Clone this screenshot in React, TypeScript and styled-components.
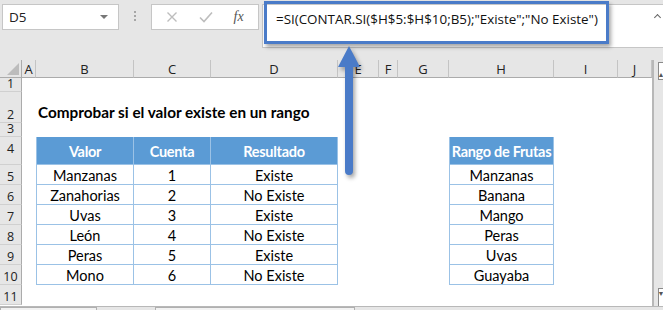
import React from "react";
import styled, { createGlobalStyle } from "styled-components";

const GlobalStyle = createGlobalStyle`
  html, body {
    margin: 0;
    padding: 0;
    background: #e6e6e6;
  }
  * {
    box-sizing: border-box;
  }
`

const COLS = [22, 14, 98, 77, 127, 41, 19, 51, 105, 64, 34]
const LETTERS = ["", "A", "B", "C", "D", "E", "F", "G", "H", "I", "J"]
const ROWS = [14, 31, 14, 28, 20, 20, 20, 20, 20, 20, 20]

const BLUE = "#4a7bc8"
const HEAD_BG = "#5b9bd5"
const LINE = "#9bc2e6"

const Page = styled.div`
  position: relative;
  width: 663px;
  height: 310px;
  overflow: hidden;
  background: #e6e6e6;
  font-family: "Open Sans", "Liberation Sans", sans-serif;
`

// FORMULA BAR

const FormulaBar = styled.div`
  display: flex;
  align-items: flex-start;
  height: 60px;
  padding: 4px 0 0 2px;
`

const NameBox = styled.div`
  display: flex;
  align-items: center;
  justify-content: space-between;
  width: 117px;
  height: 26px;
  padding: 0 6px 0 6px;
  background: #fff;
  border: 1px solid #c6c6c6;
  font-size: 13.5px;
  color: #222;
`

const Caret = styled.span`
  width: 0;
  height: 0;
  border-left: 4px solid transparent;
  border-right: 4px solid transparent;
  border-top: 4px solid #777;
  margin-right: 4px;
`

const Dots = styled.div`
  display: flex;
  flex-direction: column;
  gap: 2px;
  width: 32px;
  padding-top: 7px;
  align-items: center;

  & > span {
    width: 2px;
    height: 2px;
    background: #a6a6a6;
  }
`

const FxBox = styled.div`
  display: flex;
  align-items: center;
  justify-content: space-around;
  width: 108px;
  height: 26px;
  padding: 0 4px;
  background: #fff;
  border: 1px solid #c6c6c6;
`

const FxLabel = styled.span`
  font-family: "Liberation Serif", serif;
  font-style: italic;
  font-size: 14px;
  color: #555;
`

const FormulaInput = styled.div`
  position: relative;
  flex: 1;
  height: 44px;
  margin-left: 3px;
  padding: 5px 0 0 13px;
  background: #fff;
  border: 1px solid #c6c6c6;
  border-right: none;
  font-size: 13.4px;
  color: #111;
  white-space: nowrap;
`

const Collapse = styled.span`
  position: absolute;
  right: 3px;
  top: 10px;
  width: 5px;
  height: 5px;
  border-left: 1.5px solid #666;
  border-top: 1.5px solid #666;
  transform: rotate(45deg);
`

const Highlight = styled.div`
  position: absolute;
  left: 264px;
  top: 1px;
  width: 345px;
  height: 43px;
  border: 3px solid ${BLUE};
  box-shadow: 2px 3px 4px rgba(0, 0, 0, 0.35);
  pointer-events: none;
`

const Arrow = styled.svg`
  position: absolute;
  left: 336px;
  top: 45px;
  filter: drop-shadow(2px 3px 2px rgba(0, 0, 0, 0.35));
`

// SHEET

const Sheet = styled.div`
  display: flex;
`

const Grid = styled.div`
  display: grid;
  grid-template-columns: ${COLS.map(c => c + "px").join(" ")};
  grid-template-rows: 18px ${ROWS.map(r => r + "px").join(" ")};
  background: #fff;
  font-family: Lato, "Open Sans", sans-serif;
  font-size: 14.5px;
  color: #000;
`

const Corner = styled.div`
  position: relative;
  background: #e6e6e6;
  border-right: 1px solid #ababab;
  border-bottom: 1px solid #ababab;

  & > svg {
    position: absolute;
    right: 2px;
    bottom: 2px;
  }
`

const ColHead = styled.div`
  display: flex;
  align-items: center;
  justify-content: center;
  background: #e6e6e6;
  border-right: 1px solid #c4c4c4;
  border-bottom: 1px solid #ababab;
  font-family: "Open Sans", sans-serif;
  font-size: 13px;
  color: #222;
  overflow: hidden;
`

const RowHead = styled.div<{ $center?: boolean }>`
  display: flex;
  align-items: ${p => p.$center ? "center" : "flex-end"};
  justify-content: center;
  background: #e6e6e6;
  border-right: 1px solid #ababab;
  border-bottom: 1px solid #d0d0d0;
  font-family: "Open Sans", sans-serif;
  font-size: 12.5px;
  line-height: 11px;
  padding-bottom: ${p => p.$center ? "4px" : "2px"};
  color: #222;
`

const Title = styled.div`
  position: relative;
  z-index: 1;
  display: flex;
  align-items: flex-end;
  padding: 0 0 2px 2px;
  font-size: 15.3px;
  font-weight: 700;
  white-space: nowrap;
  overflow: visible;
`

type Kind = "blank" | "head" | "body"

const Cell = styled.div<{ $kind: Kind; $first?: boolean }>`
  display: flex;
  align-items: center;
  justify-content: center;
  white-space: nowrap;
  background: ${p => p.$kind === "head" ? HEAD_BG : p.$kind === "body" ? "#fff" : "transparent"};
  color: ${p => p.$kind === "head" ? "#fff" : "#000"};
  font-weight: ${p => p.$kind === "head" ? 700 : 400};
  letter-spacing: ${p => p.$kind === "head" ? "-0.3px" : "0"};
  border-right: ${p => p.$kind === "blank" ? "none" : `1px solid ${LINE}`};
  border-bottom: ${p => p.$kind === "blank" ? "none" : `1px solid ${LINE}`};
  border-left: ${p => p.$kind !== "blank" && p.$first ? `1px solid ${LINE}` : "none"};
  padding-top: 2px;
`

const Scroll = styled.div`
  display: flex;
  flex-direction: column;
  justify-content: space-between;
  width: 11px;
  height: 246px;
  padding: 2px 0 0 4px;
  border-left: 2px solid #b8b8b8;
  background: #e6e6e6;
`

const ScrollBtn = styled.div<{ $down?: boolean }>`
  display: flex;
  align-items: ${p => p.$down ? "flex-start" : "flex-end"};
  justify-content: center;
  height: 18px;
  background: #fff;
  border: 1px solid #8a8a8a;
  border-right: none;
  ${p => p.$down ? "border-bottom: none;" : ""}
  font-size: 7px;
  color: #555;
  line-height: 9px;
`

const BottomBar = styled.div`
  display: flex;
  gap: 58px;
  height: 4px;
  border-top: 1px solid #b8b8b8;

  & > span {
    height: 4px;
    background: #f2f2f2;
    border: 1px solid #b0b0b0;
  }
`

const TableB = ["Manzanas", "Zanahorias", "Uvas", "León", "Peras", "Mono"]
const TableD = ["Existe", "No Existe", "Existe", "No Existe", "Existe", "No Existe"]
const Frutas = ["Manzanas", "Banana", "Mango", "Peras", "Uvas", "Guayaba"]

function cellFor(row: number, col: string): { kind: Kind; text?: string; first?: boolean } {
  if (row === 4) {
    if (col === "B") return { kind: "head", text: "Valor", first: true }
    if (col === "C") return { kind: "head", text: "Cuenta" }
    if (col === "D") return { kind: "head", text: "Resultado" }
    if (col === "H") return { kind: "head", text: "Rango de Frutas", first: true }
  }
  if (row >= 5 && row <= 10) {
    const i = row - 5
    if (col === "B") return { kind: "body", text: TableB[i], first: true }
    if (col === "C") return { kind: "body", text: String(i + 1) }
    if (col === "D") return { kind: "body", text: TableD[i] }
    if (col === "H") return { kind: "body", text: Frutas[i], first: true }
  }
  return { kind: "blank" }
}

export default function App() {
  return (
    <Page>
      <GlobalStyle />
      <FormulaBar>
        <NameBox>
          D5
          <Caret />
        </NameBox>
        <Dots><span /><span /><span /></Dots>
        <FxBox>
          <svg width="12" height="12" viewBox="0 0 12 12">
            <path d="M1.5 1.5 L10.5 10.5 M10.5 1.5 L1.5 10.5" stroke="#bdbdbd" strokeWidth="1.4" />
          </svg>
          <svg width="14" height="12" viewBox="0 0 14 12">
            <path d="M1 6.5 L5 10.5 L13 1.5" stroke="#bdbdbd" strokeWidth="1.6" fill="none" />
          </svg>
          <FxLabel>fx</FxLabel>
        </FxBox>
        <FormulaInput>
          =SI(CONTAR.SI($H$5:$H$10;B5);"Existe";"No Existe")
          <Collapse />
        </FormulaInput>
      </FormulaBar>

      <Sheet>
        <Grid>
          <Corner>
            <svg width="12" height="12" viewBox="0 0 12 12">
              <path d="M12 0 L12 12 L0 12 Z" fill="#bcbcbc" />
            </svg>
          </Corner>
          {LETTERS.slice(1).map(l => <ColHead key={l}>{l}</ColHead>)}
          {ROWS.map((_, ri) => {
            const row = ri + 1
            return (
              <React.Fragment key={row}>
                <RowHead $center={row === 4}>{row}</RowHead>
                {LETTERS.slice(1).map(col => {
                  if (row === 2 && col === "B") {
                    return <Title key={col}>Comprobar si el valor existe en un rango</Title>
                  }
                  const c = cellFor(row, col)
                  return <Cell key={col} $kind={c.kind} $first={c.first}>{c.text}</Cell>
                })}
              </React.Fragment>
            )
          })}
        </Grid>
        <Scroll>
          <ScrollBtn>▲</ScrollBtn>
          <ScrollBtn $down>▼</ScrollBtn>
        </Scroll>
      </Sheet>
      <BottomBar>
        <span style={{ width: 97 }} />
        <span style={{ width: 200 }} />
      </BottomBar>

      <Highlight />
      <Arrow width="26" height="132" viewBox="0 0 26 132">
        <path d="M13 1 L24 22 L17 22 L17 126 Q17 130 13 130 Q9 130 9 126 L9 22 L2 22 Z" fill={BLUE} />
      </Arrow>
    </Page>
  )
}
